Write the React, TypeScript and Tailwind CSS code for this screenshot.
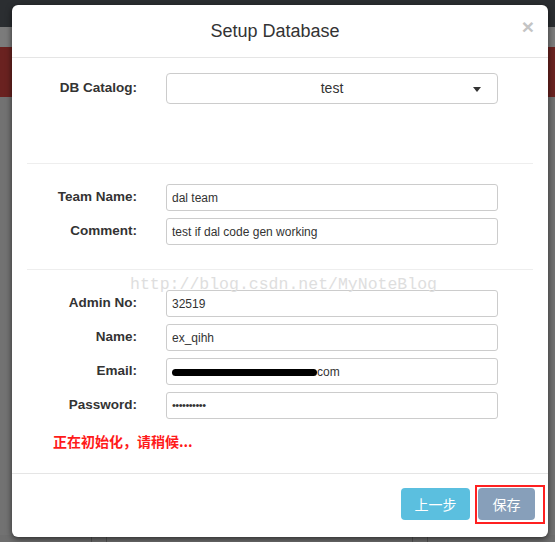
const labelCls =
  "w-[110px] shrink-0 text-right font-bold text-[13.5px] text-[#333]";
const inputCls =
  "h-[27px] w-[332px] rounded-[3px] border border-[#ccc] bg-white px-[5px] flex items-center text-[12px] text-[#333]";

const teamRows = [
  { label: "Team Name:", value: "dal team" },
  { label: "Comment:", value: "test if dal code gen working" },
];

const FieldRow = ({ label, children }: { label: string; children: React.ReactNode }) => (
  <div className="flex items-center gap-[29px]">
    <span className={labelCls}>{label}</span>
    <div className={inputCls}>{children}</div>
  </div>
);

export default function App() {
  return (
    <div className="relative w-[555px] h-[542px] overflow-hidden bg-[#737373] font-['Liberation_Sans',Arial,sans-serif]">
      {/* page behind the modal */}
      <div className="h-[27px] bg-[#2b2e31]" />
      <div className="h-[20px] bg-[#7b7b7b]" />
      <div className="h-[50px] bg-[#6a2220]" />
      <div className="h-[438px] bg-[#727272]" />
      <div className="h-[7px] bg-[#6e6e6e] flex">
        <div className="w-[92px] border-r border-[#555]" />
        <div className="w-[15px] border-r border-[#555]" />
        <div className="w-[306px] border-r border-[#555]" />
        <div className="w-[15px] border-r border-[#555]" />
      </div>

      {/* modal */}
      <div className="absolute left-[12px] top-[5px] w-[536px] h-[532px] rounded-[6px] bg-white shadow-[0_2px_6px_rgba(0,0,0,0.6)] flex flex-col">
        {/* header */}
        <div className="relative h-[53px] shrink-0 border-b border-[#e5e5e5] flex items-center justify-center pr-[10px]">
          <span className="text-[18px] text-[#333]">Setup Database</span>
          <span className="absolute right-[14px] top-[11px] text-[21px] font-bold leading-none text-[#c4c4c4]">
            ×
          </span>
        </div>

        {/* body */}
        <div className="flex-1 px-[15px]">
          <div className="pt-[15px] pb-[59px] border-b border-[#eee]">
            <div className="flex items-center gap-[29px]">
              <span className={labelCls}>DB Catalog:</span>
              <div className="relative h-[31px] w-[332px] rounded-[4px] border border-[#ccc] flex items-center justify-center text-[14px] text-[#333]">
                test
                <span className="absolute right-[16px] top-[13px] w-0 h-0 border-l-[4px] border-r-[4px] border-t-[5px] border-l-transparent border-r-transparent border-t-[#333]" />
              </div>
            </div>
          </div>

          <div className="pt-[20px] pb-[24px] border-b border-[#eee] flex flex-col gap-[7px]">
            {teamRows.map((r) => (
              <FieldRow key={r.label} label={r.label}>
                {r.value}
              </FieldRow>
            ))}
          </div>

          <div className="pt-[20px] flex flex-col gap-[7px]">
            <FieldRow label="Admin No:">32519</FieldRow>
            <FieldRow label="Name:">ex_qihh</FieldRow>
            <FieldRow label="Email:">
              <span className="inline-block w-[145px] h-[7px] rounded-full bg-black mt-[2px]" />
              <span>com</span>
            </FieldRow>
            <FieldRow label="Password:">
              <span className="text-[11px] tracking-[-0.5px]">••••••••••</span>
            </FieldRow>
          </div>

          <div className="pt-[12px] pl-[26px] text-[14px] font-bold text-[#ff1a1a] font-['Noto_Sans_CJK_SC',sans-serif]">
            正在初始化，请稍候...
          </div>
        </div>

        {/* footer */}
        <div className="h-[64px] shrink-0 border-t border-[#e5e5e5] flex items-start justify-end gap-[8px] pt-[14px] pr-[13px]">
          <button className="h-[32px] w-[69px] rounded-[4px] bg-[#5bbfdf] text-white text-[14px] font-['Noto_Sans_CJK_SC',sans-serif]">
            上一步
          </button>
          <button className="h-[32px] w-[57px] rounded-[4px] bg-[#879fba] text-white text-[14px] font-['Noto_Sans_CJK_SC',sans-serif]">
            保存
          </button>
        </div>
      </div>

      {/* annotation box */}
      <div className="absolute left-[475px] top-[485px] w-[70px] h-[39px] border-2 border-[#ff2020]" />

      {/* watermark */}
      <div className="absolute left-[130px] top-[273px] text-[16.5px] text-[#dedede] font-['Liberation_Mono',monospace]">
        http://blog.csdn.net/MyNoteBlog
      </div>
    </div>
  );
}
